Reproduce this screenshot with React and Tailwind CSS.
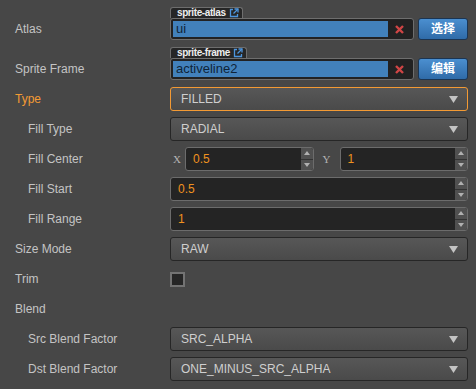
import React from 'react'

function Caret() {
  return (
    <svg width="9" height="7" viewBox="0 0 9 7" className="shrink-0">
      <path d="M0 0h9L4.5 7z" fill="#c4c4c4" />
    </svg>
  )
}

function LinkIcon() {
  return (
    <svg width="10" height="10" viewBox="0 0 10 10" className="shrink-0">
      <path d="M4 1.5H1.5v7h7V6" fill="none" stroke="#4d95dd" strokeWidth="1.3" />
      <path d="M5.5 1h3.5v3.5" fill="none" stroke="#4d95dd" strokeWidth="1.3" />
      <path d="M9 1L4.5 5.5" stroke="#4d95dd" strokeWidth="1.3" />
    </svg>
  )
}

function Label({ text, indent, orange, tall }) {
  return (
    <div
      className={`w-[170px] shrink-0 text-[12px] flex items-center ${tall ? 'h-[22px]' : ''} ${indent ? 'pl-[28px]' : 'pl-[15px]'} ${orange ? 'text-[#f39a34]' : 'text-[#c4c4c4]'}`}
    >
      {text}
    </div>
  )
}

function Row({ label, indent, orange, children }) {
  return (
    <div className="flex h-[30px] items-center">
      <Label text={label} indent={indent} orange={orange} />
      <div className="flex-1 min-w-0 flex items-center">{children}</div>
    </div>
  )
}

function Select({ value, focused }) {
  return (
    <div
      className={`h-[24px] w-full rounded-[3px] border ${focused ? 'border-[#f39a34]' : 'border-[#262626]'} bg-linear-to-b from-[#575757] to-[#4a4a4a] flex items-center pl-[10px] pr-[9px] text-[12px] text-[#cfcfcf]`}
    >
      <span className="flex-1">{value}</span>
      <Caret />
    </div>
  )
}

function NumInput({ value }) {
  return (
    <div className="flex-1 min-w-0 h-[24px] rounded-[3px] border border-[#6c6c6c] bg-[#242424] flex overflow-hidden">
      <div className="flex-1 pl-[7px] flex items-center text-[12px] text-[#f0921f]">{value}</div>
      <div className="w-[12px] flex flex-col bg-[#505050]">
        <div className="flex-1 flex items-center justify-center">
          <svg width="6" height="4" viewBox="0 0 6 4"><path d="M0 4h6L3 0z" fill="#b0b0b0" /></svg>
        </div>
        <div className="flex-1 flex items-center justify-center border-t border-[#333]">
          <svg width="6" height="4" viewBox="0 0 6 4"><path d="M0 0h6L3 4z" fill="#b0b0b0" /></svg>
        </div>
      </div>
    </div>
  )
}

function AssetRow({ label, type, value, action }) {
  return (
    <div className="flex items-end pt-[7px]">
      <Label text={label} tall />
      <div className="flex-1 min-w-0 flex flex-col">
        <div className="self-start h-[11px] flex items-center gap-[3px] pl-[6px] pr-[3px] rounded-t-[3px] border-t border-x border-[#6e6e6e] bg-[#262626] text-[10px] font-bold tracking-[-0.4px] leading-none text-[#eeeeee]">
          <span>{type}</span>
          <LinkIcon />
        </div>
        <div className="flex items-center gap-[4px]">
          <div className="flex-1 min-w-0 h-[22px] rounded-[3px] border border-[#6e6e6e] bg-[#222] p-[2px] flex">
            <div className="flex-1 bg-[#4281bb] pl-[3px] flex items-center text-[13px] text-[#0f2438]">{value}</div>
            <div className="w-[23px] flex items-center justify-center">
              <svg width="9" height="9" viewBox="0 0 9 9">
                <path d="M1 1l7 7M8 1L1 8" stroke="#d04545" strokeWidth="2.4" />
              </svg>
            </div>
          </div>
          <button className="w-[50px] h-[22px] rounded-[3px] border border-[#1b3553] bg-linear-to-b from-[#4b8fd0] to-[#2f6ba8] text-white text-[12px] font-bold font-['Liberation_Sans','Noto_Sans_CJK_SC',sans-serif]">
            {action}
          </button>
        </div>
      </div>
    </div>
  )
}

export default function App() {
  return (
    <div className="w-full min-h-screen bg-[#474747] pr-[8px] font-['Liberation_Sans','Noto_Sans_CJK_SC',sans-serif]">
      <AssetRow label="Atlas" type="sprite-atlas" value="ui" action="选择" />
      <AssetRow label="Sprite Frame" type="sprite-frame" value="activeline2" action="编辑" />

      <div className="pt-[4px]">
        <Row label="Type" orange>
          <Select value="FILLED" focused />
        </Row>
        <Row label="Fill Type" indent>
          <Select value="RADIAL" />
        </Row>
        <Row label="Fill Center" indent>
          <span className="w-[15px] shrink-0 pl-[3px] text-[11px] text-[#b4b4b4] font-['Liberation_Serif',serif]">X</span>
          <NumInput value="0.5" />
          <span className="w-[26px] shrink-0 text-center text-[11px] text-[#b4b4b4] font-['Liberation_Serif',serif]">Y</span>
          <NumInput value="1" />
        </Row>
        <Row label="Fill Start" indent>
          <NumInput value="0.5" />
        </Row>
        <Row label="Fill Range" indent>
          <NumInput value="1" />
        </Row>
        <Row label="Size Mode">
          <Select value="RAW" />
        </Row>
        <Row label="Trim">
          <div className="w-[15px] h-[15px] border-2 border-[#737373] bg-[#262626]" />
        </Row>
        <Row label="Blend" />
        <Row label="Src Blend Factor" indent>
          <Select value="SRC_ALPHA" />
        </Row>
        <Row label="Dst Blend Factor" indent>
          <Select value="ONE_MINUS_SRC_ALPHA" />
        </Row>
      </div>
    </div>
  )
}
